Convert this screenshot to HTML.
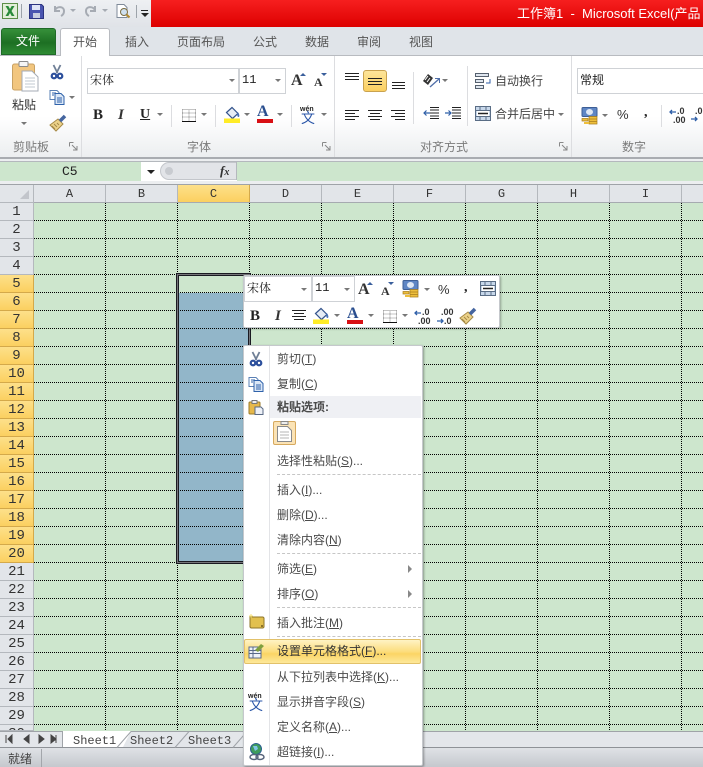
<!DOCTYPE html>
<html lang="zh"><head><meta charset="utf-8"><title>Excel</title>
<style>
*{box-sizing:border-box}
html,body{margin:0;padding:0}
body{width:703px;height:767px;position:relative;overflow:hidden;background:#e3e6ea;font:12px "Liberation Sans","Noto Sans CJK SC",sans-serif;color:#444}
.a,.t,svg.i{position:absolute}
.t{white-space:nowrap;line-height:16px;height:16px}
.ar{position:absolute;width:0;height:0;border-left:3px solid transparent;border-right:3px solid transparent;border-top:3px solid #777}
.sep{position:absolute;width:1px;background:#dcdde0}
.lb{position:absolute;color:#7a7a7a;line-height:16px;top:139px;white-space:nowrap}
.tab{position:absolute;top:34px;line-height:16px;color:#555;white-space:nowrap}
.box{position:absolute;background:#fff;border:1px solid #cfd2d6}
.col{position:absolute;top:185px;height:18px;width:72px;text-align:center;font:12px/18px "Liberation Mono",monospace;color:#333;border-right:1px solid #b4b8bd;background:#e2e5e9}
.row{position:absolute;left:0;width:34px;height:18px;text-align:center;font:14px/18px "Liberation Mono",monospace;color:#333;background:#e2e5e9;border-bottom:1px solid #b4b8bd;border-right:1px solid #b4b8bd}
.y{background:linear-gradient(#fde08a,#fbd060);border-bottom-color:#d4a94a;border-right-color:#d4a94a}
.m{position:absolute;left:277px;line-height:16px;color:#4a4a4a;white-space:nowrap}
.ms{position:absolute;left:277px;width:144px;border-top:1px dashed #c6c6c6;height:1px}
.stab{position:absolute;top:734px;font:12px/15px "Liberation Mono",monospace;color:#444}
u{text-decoration:underline}
</style></head><body>
<svg width="0" height="0" style="position:absolute"><defs>
<symbol id="sc" viewBox="0 0 16 16"><path d="M4.500 1l4 8M11.500 1l-4 8" stroke="#6f7f96" stroke-width="1.800" fill="none"/><circle cx="5" cy="12" r="2.300" fill="none" stroke="#2c4f9c" stroke-width="2.200"/><circle cx="11" cy="12" r="2.300" fill="none" stroke="#2c4f9c" stroke-width="2.200"/></symbol>
<symbol id="cp" viewBox="0 0 16 16"><path d="M1 1.500h7l2 2v7H1z" fill="#fff" stroke="#5a80b5"/><path d="M6 4.500h6l3 3v8H6z" fill="#dbe7f6" stroke="#2f62aa"/><path d="M3 4h4M3 6h2M8 9h5M8 11h5M8 13h5" stroke="#2f62aa"/></symbol>
<symbol id="br" viewBox="0 0 18 18"><path d="M1 11l8-6 5 5-7 7z" fill="#ecd28a" stroke="#a68a47"/><path d="M3 12l3 3M5 10l3 3M8 9l2 2" stroke="#a68a47"/><path d="M11 7l5-5" stroke="#45659f" stroke-width="3.500"/></symbol>
<symbol id="mo" viewBox="0 0 18 18"><rect x="1" y="0.500" width="15" height="9" rx="1" fill="#5f86c4" stroke="#3d5e95"/><ellipse cx="8.500" cy="5" rx="3.500" ry="3" fill="#dfe8f5"/><path d="M8 9.500h8v2.500H8zM8 12h8v2.500H8zM8 14.500h8V17H8z" fill="#eebf3c" stroke="#a87e1d" stroke-width=".7"/><path d="M1 11.500h6v2.500H1z" fill="#eebf3c" stroke="#a87e1d" stroke-width=".7"/><path d="M3 15h5v2H3z" fill="#eebf3c"/></symbol>
<symbol id="bd" viewBox="0 0 14 14"><path d="M.5.500h13M.5 4h13M.5 8h13M.5.500v11M7 .500v11M13.500 .500v11" stroke="#8a8a8a" stroke-dasharray="1 1" fill="none"/><path d="M0 12.500h14" stroke="#111"/></symbol>
<symbol id="bk" viewBox="0 0 17 17"><path d="M2.500 6.500l5.500-5 6 6-5.500 5z" fill="#e7edf5" stroke="#34548c" stroke-width="1.200"/><path d="M13.500 6c2 1.500 2.500 5 1 5s-1.500-3-1-5" fill="#4b73b5"/><rect x="0" y="12.500" width="16" height="4.500" fill="#ffec27"/></symbol>
<symbol id="mg" viewBox="0 0 16 15"><rect x=".5" y=".5" width="15" height="14" fill="#c7d7ea" stroke="#5a6d85"/><path d="M.5 4.500h15M.5 10.500h15M5 .500v4M11 .500v4M5 10.500v4M11 10.500v4" stroke="#5a6d85"/><rect x="2" y="5" width="12" height="5" fill="#fff"/><path d="M3 7.500h10" stroke="#222" stroke-width="1.500"/></symbol>
</defs></svg>

<!-- title bar -->
<div class="a" style="left:0;top:0;width:703px;height:27px;background:linear-gradient(#eef0f3,#e0e3e8)"></div>
<div class="a" style="left:151px;top:0;width:552px;height:27px;background:linear-gradient(#f61f1f,#dd0000)"></div>
<div class="t" style="left:517px;top:6px;color:#fff;font-size:13px;width:186px;overflow:hidden">工作簿1 &nbsp;-&nbsp; Microsoft Excel(产品</div>
<svg class="i" style="left:2px;top:3px" width="16" height="16" viewBox="0 0 16 16"><rect x=".5" y=".5" width="15" height="15" fill="#e3efd8" stroke="#5d8f48"/><path d="M3.500 3h2.800l1.700 3 1.700-3h2.800l-3 5 3 5H9.700L8 10l-1.700 3H3.500l3-5z" fill="#2a8a3a"/></svg>
<div class="a" style="left:21px;top:4px;width:1px;height:14px;background:#9da3aa"></div>
<svg class="i" style="left:29px;top:4px" width="15" height="15" viewBox="0 0 15 15"><path d="M.5.500h12l2 2v12H.5z" fill="#4a55b0" stroke="#2c3480"/><rect x="3" y="1" width="8" height="5" fill="#dfe4f6"/><rect x="4" y="9" width="7" height="5" fill="#c8cde0"/></svg>
<svg class="i" style="left:52px;top:3px" width="15" height="15" viewBox="0 0 15 15"><path d="M3 3v5h5M3 7c2-4 9-4 9 1 0 2-1 4-3 5" fill="none" stroke="#a6abb3" stroke-width="2"/></svg>
<div class="ar" style="left:70px;top:9px;border-top-color:#a6abb3"></div>
<svg class="i" style="left:83px;top:3px" width="15" height="15" viewBox="0 0 15 15"><path d="M12 3v5H7M12 7C10 3 3 3 3 8c0 2 1 4 3 5" fill="none" stroke="#a6abb3" stroke-width="2"/></svg>
<div class="ar" style="left:102px;top:9px;border-top-color:#a6abb3"></div>
<svg class="i" style="left:115px;top:4px" width="16" height="15" viewBox="0 0 16 15"><path d="M2 .500h7l3 3v10H2z" fill="#fff" stroke="#7f8a99"/><circle cx="9" cy="8" r="3.500" fill="#cfe0ef" stroke="#7a6c40"/><path d="M11.500 10.500l3 3" stroke="#b28a30" stroke-width="2"/></svg>
<div class="a" style="left:136px;top:5px;width:1px;height:13px;background:#9da3aa"></div>
<div class="a" style="left:141px;top:10px;width:7px;height:1px;background:#222"></div>
<div class="ar" style="left:141px;top:13px;border-left-width:4px;border-right-width:4px;border-top:4px solid #222"></div>

<!-- tab row -->
<div class="a" style="left:0;top:27px;width:703px;height:29px;background:#e0e4e9"></div>
<div class="a" style="left:0;top:55px;width:703px;height:1px;background:#b8bbc0"></div>
<div class="a" style="left:1px;top:28px;width:55px;height:27px;border-radius:3px 3px 0 0;background:linear-gradient(#36903a,#1d6f23 55%,#2f8c34);border:1px solid #1f6a27"></div>
<div class="t" style="left:16px;top:33px;color:#fff;font-size:12px">文件</div>
<div class="a" style="left:60px;top:28px;width:50px;height:28px;background:#fff;border:1px solid #b8bbc0;border-bottom:none;border-radius:3px 3px 0 0"></div>
<div class="tab" style="left:73px">开始</div>
<div class="tab" style="left:125px">插入</div>
<div class="tab" style="left:177px">页面布局</div>
<div class="tab" style="left:253px">公式</div>
<div class="tab" style="left:305px">数据</div>
<div class="tab" style="left:357px">审阅</div>
<div class="tab" style="left:409px">视图</div>

<!-- ribbon -->
<div class="a" style="left:0;top:56px;width:703px;height:101px;background:linear-gradient(#fff 60%,#eceef0)"></div>
<div class="a" style="left:0;top:157px;width:703px;height:2px;background:#a9acb1"></div>
<div class="a" style="left:0;top:159px;width:703px;height:2px;background:#eceef0"></div>
<div class="sep" style="left:81px;top:56px;height:101px"></div>
<div class="sep" style="left:334px;top:56px;height:101px"></div>
<div class="sep" style="left:571px;top:56px;height:101px"></div>
<div class="sep" style="left:171px;top:105px;height:22px"></div>
<div class="sep" style="left:215px;top:105px;height:22px"></div>
<div class="sep" style="left:291px;top:105px;height:22px"></div>
<div class="sep" style="left:413px;top:72px;height:52px"></div>
<div class="sep" style="left:467px;top:66px;height:60px"></div>
<div class="sep" style="left:661px;top:105px;height:22px"></div>

<!-- clipboard -->
<svg class="i" style="left:11px;top:61px" width="28" height="32" viewBox="0 0 28 32"><rect x="1.500" y="3" width="22" height="26" rx="2" fill="#f2c67f" stroke="#c9a264"/><rect x="8" y="0.500" width="9" height="5" rx="1" fill="#f5f5f5" stroke="#8a8a8a"/><path d="M11 10h10l6 6v14H11z" fill="#fff" stroke="#a4abb5"/><path d="M14 17h10M14 20h10M14 23h10M14 26h10" stroke="#c2c8d0"/></svg>
<div class="t" style="left:12px;top:97px;color:#333">粘贴</div>
<div class="ar" style="left:21px;top:122px"></div>
<svg class="i" style="left:49px;top:64px" width="16" height="16"><use href="#sc"/></svg>
<svg class="i" style="left:49px;top:89px" width="16" height="16"><use href="#cp"/></svg>
<div class="ar" style="left:69px;top:96px"></div>
<svg class="i" style="left:49px;top:114px" width="18" height="18"><use href="#br"/></svg>
<div class="lb" style="left:13px">剪贴板</div>
<svg class="i" style="left:69px;top:142px" width="9" height="9"><path d="M.5.500h4M.5.500v4" stroke="#888" fill="none"/><path d="M3 3l5 5M8 4v4H4" stroke="#888" fill="none"/></svg>

<!-- font -->
<div class="box" style="left:87px;top:68px;width:152px;height:26px"></div>
<div class="box" style="left:239px;top:68px;width:47px;height:26px"></div>
<div class="t" style="left:90px;top:72px;color:#222;font-family:'Liberation Serif','Noto Serif CJK SC',serif">宋体</div>
<div class="t" style="left:242px;top:72px;color:#222;font-size:12px;font-family:'Liberation Mono',monospace">11</div>
<div class="ar" style="left:229px;top:79px"></div><div class="ar" style="left:275px;top:79px"></div>
<div class="t" style="left:291px;top:73px;font:bold 16px/16px 'Liberation Serif',serif;color:#333">A</div>
<div class="a" style="left:300px;top:73px;border-left:3px solid transparent;border-right:3px solid transparent;border-bottom:3px solid #3a5f9c"></div>
<div class="t" style="left:314px;top:75px;font:bold 12px/14px 'Liberation Serif',serif;color:#333">A</div>
<div class="a" style="left:321px;top:73px;border-left:3px solid transparent;border-right:3px solid transparent;border-top:3px solid #3a5f9c"></div>
<div class="t" style="left:93px;top:107px;font:bold 15px/16px 'Liberation Serif',serif;color:#222">B</div>
<div class="t" style="left:118px;top:107px;font:italic bold 15px/16px 'Liberation Serif',serif;color:#333">I</div>
<div class="t" style="left:140px;top:107px;font:bold 14px/16px 'Liberation Serif',serif;color:#222;text-decoration:underline">U</div>
<div class="ar" style="left:157px;top:113px"></div>
<svg class="i" style="left:182px;top:109px" width="14" height="14"><use href="#bd"/></svg>
<div class="ar" style="left:201px;top:113px"></div>
<svg class="i" style="left:224px;top:106px" width="17" height="17"><use href="#bk"/></svg>
<div class="ar" style="left:244px;top:113px"></div>
<div class="t" style="left:257px;top:104px;font:bold 16px/16px 'Liberation Serif',serif;color:#2a4e8f">A</div>
<div class="a" style="left:257px;top:119px;width:16px;height:4px;background:#d80f14"></div>
<div class="ar" style="left:277px;top:113px"></div>
<div class="t" style="left:300px;top:106px;font:bold 7px/8px 'Liberation Sans',sans-serif;color:#222">wén</div>
<div class="t" style="left:301px;top:110px;font-size:14px;color:#2a56a8">文</div>
<div class="ar" style="left:321px;top:113px"></div>
<div class="lb" style="left:187px">字体</div>
<svg class="i" style="left:322px;top:142px" width="9" height="9"><path d="M.5.500h4M.5.500v4" stroke="#888" fill="none"/><path d="M3 3l5 5M8 4v4H4" stroke="#888" fill="none"/></svg>

<!-- align -->
<svg class="i" style="left:340px;top:68px" width="70" height="60" viewBox="0 0 70 60">
<path d="M5 6.500h14M5 9.500h14M5 12.500h14" stroke="#222" transform="translate(0 -1)"/>
<path d="M52 14.500h13M52 17.500h13M52 20.500h13" stroke="#222"/>
<path d="M5 42.500h14M5 45.500h10M5 48.500h14M5 51.500h10" stroke="#222"/>
<path d="M28 42.500h14M30 45.500h10M28 48.500h14M30 51.500h10" stroke="#222"/>
<path d="M51 42.500h14M55 45.500h10M51 48.500h14M55 51.500h10" stroke="#222"/>
</svg>
<div class="a" style="left:363px;top:70px;width:24px;height:22px;border:1px solid #c9a24f;border-radius:3px;background:linear-gradient(#fde59a,#fbcf60)"></div>
<svg class="i" style="left:363px;top:70px" width="24" height="22"><path d="M5 8.500h14M5 11.500h14M5 14.500h14" stroke="#222"/></svg>
<svg class="i" style="left:423px;top:74px" width="18" height="15" viewBox="0 0 18 15"><path d="M0 7l5-7 5 4-5 7z" fill="#333"/><path d="M2 6l3-4M4 8l3-4" stroke="#fff"/><path d="M7 13L16 5" stroke="#4f6ea8" stroke-width="1.300"/><path d="M12 4.500h4.500V9" fill="none" stroke="#4f6ea8"/></svg>
<div class="ar" style="left:442px;top:79px"></div>
<svg class="i" style="left:423px;top:105px" width="38" height="16" viewBox="0 0 38 16"><path d="M7 2.500h9M7 5h9M7 8h9M7 11h9M7 13.500h9M29 2.500h9M29 5h9M29 8h9M29 11h9M29 13.500h9" stroke="#222"/><path d="M7 8H1M3.500 5.500L1 8l2.500 2.500M22 8h6M25.500 5.500L28 8l-2.500 2.500" fill="none" stroke="#2f5fa8" stroke-width="1.200"/></svg>
<svg class="i" style="left:475px;top:73px" width="16" height="16" viewBox="0 0 16 16"><path d="M.5.500h13v3H.5zM.5 6.500h8v3H.5zM.5 12.500h8v3H.5z" fill="#dfe6ef" stroke="#55606e"/><path d="M15 6v4h-4" fill="none" stroke="#2f5fa8"/></svg>
<div class="t" style="left:495px;top:73px">自动换行</div>
<svg class="i" style="left:475px;top:106px" width="16" height="15"><use href="#mg"/></svg>
<div class="t" style="left:495px;top:106px">合并后居中</div>
<div class="ar" style="left:558px;top:113px"></div>
<div class="lb" style="left:420px">对齐方式</div>
<svg class="i" style="left:559px;top:142px" width="9" height="9"><path d="M.5.500h4M.5.500v4" stroke="#888" fill="none"/><path d="M3 3l5 5M8 4v4H4" stroke="#888" fill="none"/></svg>

<!-- number -->
<div class="box" style="left:577px;top:68px;width:140px;height:26px"></div>
<div class="t" style="left:580px;top:72px;color:#222">常规</div>
<svg class="i" style="left:581px;top:107px" width="18" height="18"><use href="#mo"/></svg>
<div class="ar" style="left:602px;top:114px"></div>
<div class="t" style="left:617px;top:107px;color:#333;font-size:13px">%</div>
<div class="t" style="left:644px;top:105px;font:bold 14px/16px 'Liberation Serif',serif;color:#222">,</div>
<svg class="i" style="left:669px;top:105px" width="34" height="20" viewBox="0 0 34 20"><path d="M7 7H1M3 5L1 7l2 2" fill="none" stroke="#2f5fa8" stroke-width="1.300"/><text x="8" y="9" font-family="Liberation Sans" font-size="9" font-weight="bold" fill="#333">.0</text><text x="4" y="18" font-family="Liberation Sans" font-size="9" font-weight="bold" fill="#333">.00</text><text x="26" y="9" font-family="Liberation Sans" font-size="9" font-weight="bold" fill="#333">.0</text><path d="M22 14h6M26 12l2 2-2 2" fill="none" stroke="#2f5fa8" stroke-width="1.300"/></svg>
<div class="lb" style="left:622px">数字</div>

<!-- formula bar -->
<div class="a" style="left:0;top:161px;width:703px;height:20px;background:#cde6cd;border-top:1px solid #b4b8bd"></div>
<div class="a" style="left:141px;top:162px;width:96px;height:19px;background:#fff"></div>
<div class="a" style="left:160px;top:162px;width:77px;height:18px;background:#e2e4e8;border:1px solid #c3c6cb;border-radius:9px 0 0 9px"></div>
<div class="a" style="left:165px;top:167px;width:8px;height:8px;border-radius:50%;background:#c8cbd0"></div>
<div class="a" style="left:236px;top:162px;width:1px;height:18px;background:#b4b8bd"></div>
<div class="ar" style="left:147px;top:170px;border-left-width:4px;border-right-width:4px;border-top:4px solid #222"></div>
<div class="t" style="left:62px;top:164px;font:13px/16px 'Liberation Mono',monospace;color:#222">C5</div>
<div class="t" style="left:220px;top:163px;font:italic bold 13px/16px 'Liberation Serif',serif;color:#333">f<span style="font-size:10px">x</span></div>
<div class="a" style="left:0;top:181px;width:703px;height:4px;background:#eceef0;border-bottom:1px solid #9fa3a8"></div>

<!-- grid -->
<div class="a" style="left:34px;top:203px;width:669px;height:528px;background:#cde6cd"></div>
<div class="a" style="left:179px;top:293px;width:69px;height:268px;background:#92b6c9"></div>
<svg class="i" style="left:34px;top:203px" width="669" height="528"><defs><pattern id="g" width="72" height="18" patternUnits="userSpaceOnUse"><path d="M0 17.500h72" stroke="#000" stroke-dasharray="1 1"/><path d="M71.500 0v18" stroke="#000" stroke-dasharray="1 1"/></pattern></defs><rect width="669" height="528" fill="url(#g)"/></svg>
<div class="a" style="left:0;top:185px;width:34px;height:18px;background:#e2e5e9;border-right:1px solid #b4b8bd;border-bottom:1px solid #b4b8bd"></div>
<div class="a" style="left:20px;top:190px;border-left:9px solid transparent;border-bottom:9px solid #c2c5cb"></div>
<div class="col" style="left:34px">A</div><div class="col" style="left:106px">B</div><div class="col y" style="left:178px;border-bottom:1px solid #d4a94a">C</div><div class="col" style="left:250px">D</div><div class="col" style="left:322px">E</div><div class="col" style="left:394px">F</div><div class="col" style="left:466px">G</div><div class="col" style="left:538px">H</div><div class="col" style="left:610px">I</div><div class="col" style="left:682px"></div>
<div class="a" style="left:34px;top:202px;width:669px;height:1px;background:#a6aab0"></div>
<div class="row" style="top:203px">1</div><div class="row" style="top:221px">2</div><div class="row" style="top:239px">3</div><div class="row" style="top:257px">4</div>
<div class="row y" style="top:275px">5</div><div class="row y" style="top:293px">6</div><div class="row y" style="top:311px">7</div><div class="row y" style="top:329px">8</div><div class="row y" style="top:347px">9</div><div class="row y" style="top:365px">10</div><div class="row y" style="top:383px">11</div><div class="row y" style="top:401px">12</div><div class="row y" style="top:419px">13</div><div class="row y" style="top:437px">14</div><div class="row y" style="top:455px">15</div><div class="row y" style="top:473px">16</div><div class="row y" style="top:491px">17</div><div class="row y" style="top:509px">18</div><div class="row y" style="top:527px">19</div><div class="row y" style="top:545px">20</div>
<div class="row" style="top:563px">21</div><div class="row" style="top:581px">22</div><div class="row" style="top:599px">23</div><div class="row" style="top:617px">24</div><div class="row" style="top:635px">25</div><div class="row" style="top:653px">26</div><div class="row" style="top:671px">27</div><div class="row" style="top:689px">28</div><div class="row" style="top:707px">29</div><div class="row" style="top:725px;height:6px;overflow:hidden">30</div>

<!-- selection -->
<svg class="i" style="left:176px;top:273px" width="76" height="292"><rect x="1.500" y="1.500" width="72" height="288" fill="none" stroke="#1a1a22" stroke-width="3"/><rect x="1.500" y="1.500" width="72" height="288" fill="none" stroke="#fff" stroke-width="1" stroke-dasharray="1 1" opacity=".8"/></svg>

<!-- sheet tabs -->
<div class="a" style="left:0;top:731px;width:703px;height:17px;background:#e3e6ea;border-top:1px solid #9fa3a8"></div>
<div class="a" style="left:0;top:747px;width:703px;height:1px;background:#8e9297"></div>
<svg class="i" style="left:5px;top:734px" width="52" height="10" viewBox="0 0 52 10"><path d="M1 1v8M7 1v8L3 5zM24 1v8l-5-4zM34 1v8l5-4zM46 1v8l5-4zM51 1v8" fill="#444" stroke="#444"/></svg>
<div class="a" style="left:62px;top:731px;width:1px;height:16px;background:#9fa3a8"></div>
<svg class="i" style="left:62px;top:731px" width="190" height="17" viewBox="0 0 190 17"><path d="M1 0v16h60l8-16z" fill="#fff"/><path d="M55 16.500l14-16h56" fill="none" stroke="#9fa3a8"/><path d="M113 16.500l14-16h56" fill="none" stroke="#9fa3a8"/><path d="M171 16.500l14-16h5" fill="none" stroke="#9fa3a8"/></svg>
<div class="stab" style="left:73px">Sheet1</div><div class="stab" style="left:130px">Sheet2</div><div class="stab" style="left:188px">Sheet3</div>

<!-- status -->
<div class="a" style="left:0;top:748px;width:703px;height:19px;background:linear-gradient(#dfe2e6,#c5c8cd)"></div>
<div class="a" style="left:41px;top:749px;width:1px;height:18px;background:#a3a6ab"></div>
<div class="t" style="left:8px;top:751px;color:#444">就绪</div>

<!-- mini toolbar -->
<div class="a" style="left:243px;top:275px;width:257px;height:53px;background:#fff;border:1px solid #c5c8cc;border-radius:2px;box-shadow:1px 1px 2px rgba(0,0,0,.3)"></div>
<div class="box" style="left:244px;top:276px;width:68px;height:26px"></div>
<div class="box" style="left:312px;top:276px;width:43px;height:26px"></div>
<div class="t" style="left:247px;top:280px;color:#222;font-family:'Liberation Serif','Noto Serif CJK SC',serif">宋体</div>
<div class="t" style="left:315px;top:280px;color:#222;font-family:'Liberation Mono',monospace">11</div>
<div class="ar" style="left:301px;top:288px"></div><div class="ar" style="left:344px;top:288px"></div>
<div class="t" style="left:358px;top:282px;font:bold 16px/16px 'Liberation Serif',serif;color:#333">A</div>
<div class="a" style="left:367px;top:282px;border-left:3px solid transparent;border-right:3px solid transparent;border-bottom:3px solid #3a5f9c"></div>
<div class="t" style="left:381px;top:284px;font:bold 12px/14px 'Liberation Serif',serif;color:#333">A</div>
<div class="a" style="left:388px;top:282px;border-left:3px solid transparent;border-right:3px solid transparent;border-top:3px solid #3a5f9c"></div>
<svg class="i" style="left:402px;top:280px" width="18" height="18"><use href="#mo"/></svg>
<div class="ar" style="left:424px;top:288px"></div>
<div class="t" style="left:438px;top:282px;color:#333;font-size:13px">%</div>
<div class="t" style="left:464px;top:280px;font:bold 14px/16px 'Liberation Serif',serif;color:#222">,</div>
<svg class="i" style="left:480px;top:281px" width="16" height="15"><use href="#mg"/></svg>
<div class="t" style="left:250px;top:308px;font:bold 15px/16px 'Liberation Serif',serif;color:#222">B</div>
<div class="t" style="left:275px;top:308px;font:italic bold 15px/16px 'Liberation Serif',serif;color:#333">I</div>
<svg class="i" style="left:291px;top:309px" width="16" height="13"><path d="M1 1.500h14M3 4.500h10M1 7.500h14M3 10.500h10" stroke="#222"/></svg>
<svg class="i" style="left:313px;top:307px" width="17" height="17"><use href="#bk"/></svg>
<div class="ar" style="left:334px;top:314px"></div>
<div class="t" style="left:347px;top:306px;font:bold 16px/16px 'Liberation Serif',serif;color:#2a4e8f">A</div>
<div class="a" style="left:347px;top:320px;width:16px;height:4px;background:#d80f14"></div>
<div class="ar" style="left:368px;top:314px"></div>
<svg class="i" style="left:383px;top:310px" width="14" height="14"><use href="#bd"/></svg>
<div class="ar" style="left:402px;top:314px"></div>
<svg class="i" style="left:414px;top:307px" width="20" height="20" viewBox="0 0 20 20"><path d="M7 6H1M3 4L1 6l2 2" fill="none" stroke="#2f5fa8" stroke-width="1.300"/><text x="8" y="8" font-family="Liberation Sans" font-size="9" font-weight="bold" fill="#333">.0</text><text x="4" y="17" font-family="Liberation Sans" font-size="9" font-weight="bold" fill="#333">.00</text></svg>
<svg class="i" style="left:436px;top:307px" width="20" height="20" viewBox="0 0 20 20"><text x="5" y="8" font-family="Liberation Sans" font-size="9" font-weight="bold" fill="#333">.00</text><path d="M1 14h6M5 12l2 2-2 2" fill="none" stroke="#2f5fa8" stroke-width="1.300"/><text x="8" y="17" font-family="Liberation Sans" font-size="9" font-weight="bold" fill="#333">.0</text></svg>
<svg class="i" style="left:459px;top:307px" width="18" height="18"><use href="#br"/></svg>

<!-- context menu -->
<div class="a" style="left:243px;top:345px;width:180px;height:421px;background:#fff;border:1px solid #c5c8cc;border-radius:2px;box-shadow:1px 1px 2px rgba(0,0,0,.35)"></div>
<div class="a" style="left:269px;top:346px;width:1px;height:419px;background:#e3e4e7"></div>
<div class="a" style="left:270px;top:396px;width:151px;height:22px;background:#eff0f4"></div>
<svg class="i" style="left:248px;top:351px" width="16" height="16"><use href="#sc"/></svg>
<svg class="i" style="left:248px;top:376px" width="16" height="16"><use href="#cp"/></svg>
<svg class="i" style="left:248px;top:400px" width="16" height="15" viewBox="0 0 16 15"><rect x="1" y="2" width="11" height="12" rx="1" fill="#e6b84a" stroke="#9a7a2a"/><rect x="4" y="0.500" width="5" height="3" fill="#eee" stroke="#777"/><path d="M7 7h6l2 2v5.500H7z" fill="#eef1f7" stroke="#5a6a85"/></svg>
<div class="a" style="left:273px;top:421px;width:23px;height:24px;background:#fbe3b5;border:1px solid #d6a95e;border-radius:2px"></div>
<svg class="i" style="left:276px;top:421px" width="17" height="23" viewBox="0 0 17 23"><rect x="5" y=".5" width="7" height="3" fill="#eee" stroke="#888"/><path d="M1.500 5.500h10l4 4v11h-14z" fill="#fff" stroke="#8a8a8a"/><path d="M4 11h9M4 14h9M4 17h9" stroke="#b5b5b5"/></svg>
<div class="m" style="top:351px">剪切(<u>T</u>)</div>
<div class="m" style="top:376px">复制(<u>C</u>)</div>
<div class="m" style="top:399px;font-weight:bold">粘贴选项:</div>
<div class="m" style="top:453px">选择性粘贴(<u>S</u>)...</div>
<div class="ms" style="top:474px"></div>
<div class="m" style="top:482px">插入(<u>I</u>)...</div>
<div class="m" style="top:507px">删除(<u>D</u>)...</div>
<div class="m" style="top:532px">清除内容(<u>N</u>)</div>
<div class="ms" style="top:553px"></div>
<div class="m" style="top:561px">筛选(<u>E</u>)</div>
<div class="a" style="left:408px;top:565px;border-top:4px solid transparent;border-bottom:4px solid transparent;border-left:4px solid #888"></div>
<div class="m" style="top:586px">排序(<u>O</u>)</div>
<div class="a" style="left:408px;top:590px;border-top:4px solid transparent;border-bottom:4px solid transparent;border-left:4px solid #888"></div>
<div class="ms" style="top:607px"></div>
<svg class="i" style="left:248px;top:614px" width="17" height="16" viewBox="0 0 17 16"><path d="M2 3h13l1 1v9l-1 1H3l-1-1z" fill="#e2c04f" stroke="#8e7428"/><path d="M13 11h2v2h-2z" fill="#8e7428"/><path d="M3 0v4M1 2h4" stroke="#f5e27a"/></svg>
<div class="m" style="top:615px">插入批注(<u>M</u>)</div>
<div class="ms" style="top:636px"></div>
<div class="a" style="left:244px;top:639px;width:177px;height:25px;border:1px solid #e2c16a;border-radius:2px;background:linear-gradient(#fef3c4,#fcdd7e 50%,#fbd565 60%,#fde89a)"></div>
<svg class="i" style="left:248px;top:643px" width="17" height="16" viewBox="0 0 17 16"><rect x="1" y="4" width="12" height="11" fill="#eef2f8" stroke="#59698a"/><path d="M1 7.500h12M1 10.500h12M5 4v11" stroke="#59698a"/><path d="M7 7l6-6 3 2-6 6z" fill="#7f9f3e"/></svg>
<div class="m" style="top:643px;color:#333">设置单元格格式(<u>F</u>)...</div>
<div class="m" style="top:669px">从下拉列表中选择(<u>K</u>)...</div>
<div class="t" style="left:248px;top:693px;font:bold 7px/8px 'Liberation Sans',sans-serif;color:#222">wén</div>
<div class="t" style="left:249px;top:697px;font-size:14px;color:#2a56a8">文</div>
<div class="m" style="top:694px">显示拼音字段(<u>S</u>)</div>
<div class="m" style="top:719px">定义名称(<u>A</u>)...</div>
<svg class="i" style="left:248px;top:743px" width="17" height="18" viewBox="0 0 17 18"><circle cx="8" cy="6" r="5.500" fill="#3f9c5c" stroke="#2a5f8f"/><path d="M5 3h4l1 3-3 2z" fill="#7fc6e8"/><ellipse cx="6" cy="14" rx="4" ry="2.500" fill="none" stroke="#56637a" stroke-width="1.500"/><ellipse cx="12" cy="14" rx="4" ry="2.500" fill="none" stroke="#56637a" stroke-width="1.500"/></svg>
<div class="m" style="top:744px">超链接(<u>I</u>)...</div>
</body></html>
